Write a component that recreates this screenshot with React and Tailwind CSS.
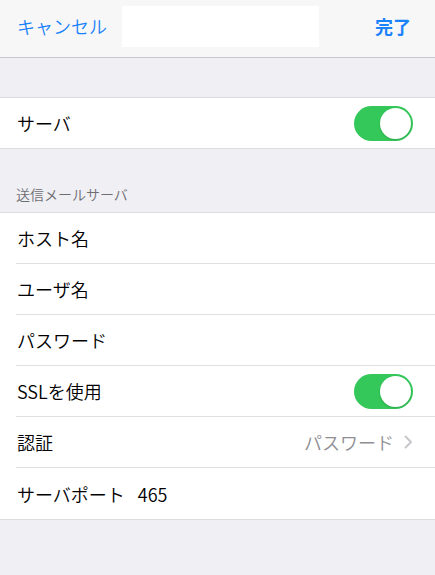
import React from "react";

const font = { fontFamily: '"Noto Sans CJK JP", "Noto Sans", sans-serif' };

function Toggle() {
  return (
    <div className="w-[59px] h-[35px] rounded-full bg-[#34c759] flex items-center justify-end pr-[2px]">
      <div className="w-[31px] h-[31px] rounded-full bg-white shadow-[0_1px_2px_rgba(0,0,0,0.15)]" />
    </div>
  );
}

function Chevron() {
  return (
    <svg width="9" height="14" viewBox="0 0 9 14" className="ml-[10px]">
      <polyline points="1.5,1.5 7,7 1.5,12.5" fill="none" stroke="#c7c7cc" strokeWidth="2" strokeLinecap="round" strokeLinejoin="round" />
    </svg>
  );
}

function Row({ label, right, last }) {
  return (
    <div className="pl-[16px]">
      <div className={`h-[51px] flex items-center pr-[22px] pl-[1px] ${last ? "" : "border-b border-[#e0e0e3]"}`}>
        <span className="text-[18px] text-black leading-none font-[350]">{label}</span>
        <div className="ml-auto flex items-center">{right}</div>
      </div>
    </div>
  );
}

export default function App() {
  return (
    <div className="w-[435px] h-[575px] bg-[#efeff4] overflow-hidden" style={font}>
      <div className="h-[58px] bg-[#f7f7f7] border-b border-[#c8c7cc] flex items-center pl-[17px] pr-[24px] pb-[5px]">
        <span className="text-[18px] text-[#1a82fb] leading-none font-[350]">キャンセル</span>
        <div className="ml-[15px] w-[197px] h-[41px] bg-white" />
        <span className="ml-auto text-[18px] text-[#1a82fb] font-semibold leading-none">完了</span>
      </div>
      <div className="h-[39px]" />
      <div className="bg-white border-y border-[#dcdce0]">
        <div className="h-[50px] flex items-center pl-[17px] pr-[22px]">
          <span className="text-[18px] text-black leading-none font-[350]">サーバ</span>
          <div className="ml-auto"><Toggle /></div>
        </div>
      </div>
      <div className="pt-[35px] pb-[8px] pl-[16px]">
        <div className="text-[14px] text-[#6d6d72] leading-[20px] font-[350]">送信メールサーバ</div>
      </div>
      <div className="bg-white border-y border-[#dcdce0]">
        <Row label="ホスト名" />
        <Row label="ユーザ名" />
        <Row label="パスワード" />
        <Row label="SSLを使用" right={<Toggle />} />
        <Row
          label="認証"
          right={
            <>
              <span className="text-[18px] text-[#8e8e93] leading-none font-[350]">パスワード</span>
              <Chevron />
            </>
          }
        />
        <Row
          label={
            <>
              サーバポート<span className="ml-[13px]">465</span>
            </>
          }
          last
        />
      </div>
    </div>
  );
}
